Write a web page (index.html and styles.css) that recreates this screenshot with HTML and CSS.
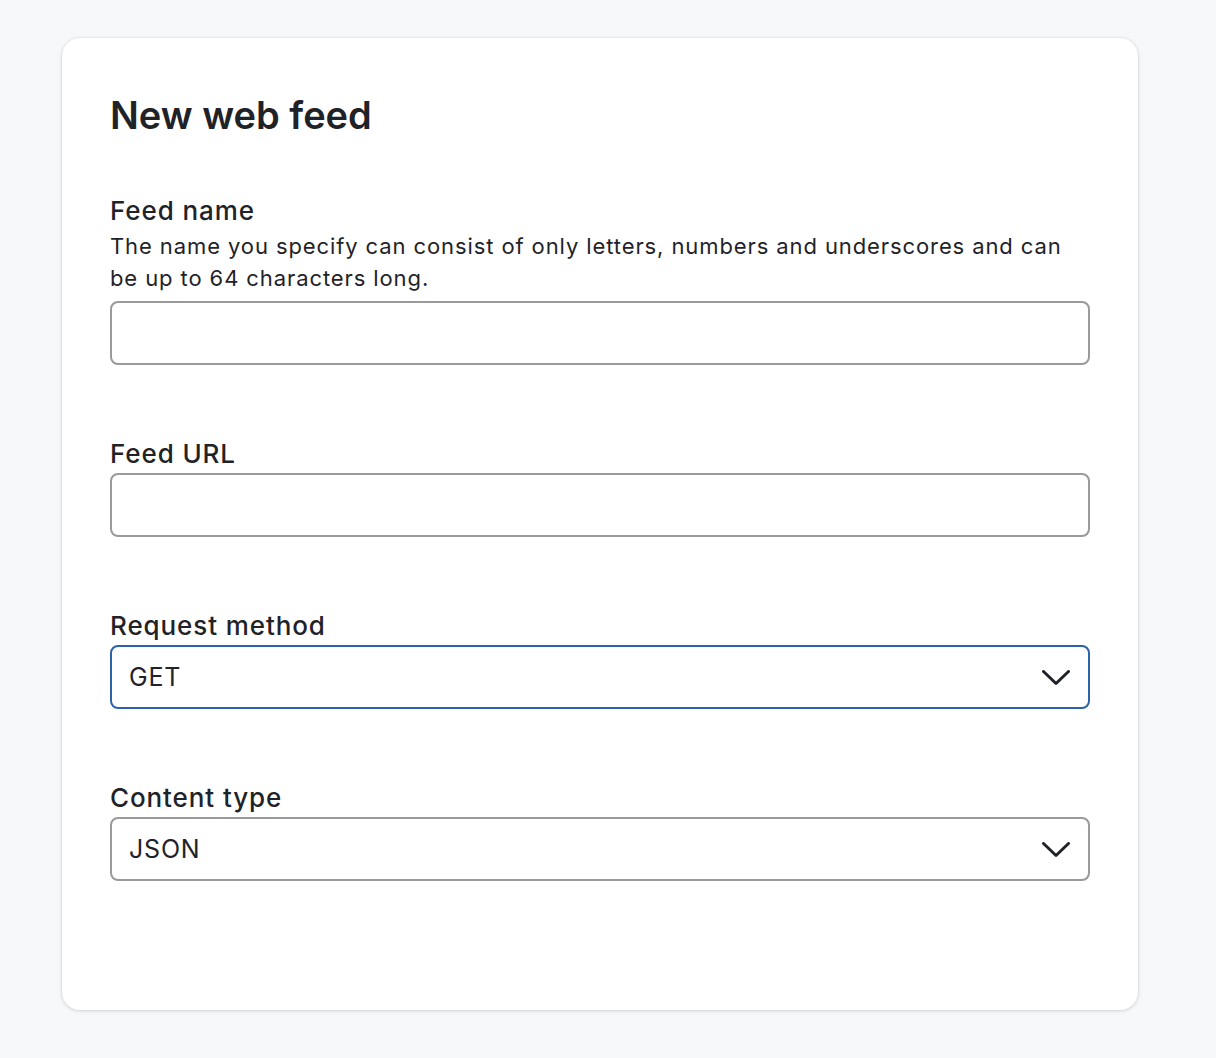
FILE: index.html
```html
<!DOCTYPE html>
<html lang="en">
<head>
<meta charset="utf-8">
<title>New web feed</title>
<link rel="stylesheet" href="styles.css">
</head>
<body>
<main class="card">
  <h1 class="title">New web feed</h1>
  <div class="field">
    <label class="label" for="name">Feed name</label>
    <p class="hint">The name you specify can consist of only letters, numbers and underscores and can be up to 64 characters long.</p>
    <input class="input" id="name" type="text">
  </div>
  <div class="field">
    <label class="label" for="url">Feed URL</label>
    <input class="input" id="url" type="text">
  </div>
  <div class="field">
    <label class="label" for="method">Request method</label>
    <div class="select focused">
      <span class="select-value">GET</span>
      <svg class="chevron" width="28" height="16" viewBox="0 0 28 16"><path d="M1.5 1.5 L14 13.5 L26.5 1.5" fill="none" stroke="#1f2328" stroke-width="3" stroke-linecap="round" stroke-linejoin="round"/></svg>
    </div>
  </div>
  <div class="field last">
    <label class="label" for="type">Content type</label>
    <div class="select">
      <span class="select-value">JSON</span>
      <svg class="chevron" width="28" height="16" viewBox="0 0 28 16"><path d="M1.5 1.5 L14 13.5 L26.5 1.5" fill="none" stroke="#1f2328" stroke-width="3" stroke-linecap="round" stroke-linejoin="round"/></svg>
    </div>
  </div>
</main>
</body>
</html>
```
FILE: styles.css
```css
* { box-sizing: border-box; }
html, body { margin: 0; padding: 0; }
body {
  background: #f7f8fa;
  font-family: Inter, "Noto Sans", "Liberation Sans", sans-serif;
  color: #1f2328;
  padding: 38px 78px 48px 62px;
}
.card {
  width: 1076px;
  height: 972px;
  background: #ffffff;
  border-radius: 18px;
  box-shadow: 0 1px 4px rgba(0,0,0,0.13), 0 0 0 1px rgba(0,0,0,0.04);
  padding: 52px 48px 48px 48px;
}
.title {
  margin: 0 0 55px 0;
  font-size: 38px;
  line-height: 50px;
  font-weight: 600;
  letter-spacing: 0;
}
.field { margin-bottom: 73px; }
.label {
  display: block;
  font-size: 26px;
  line-height: 32px;
  font-weight: 500;
  letter-spacing: 0.9px;
  margin-bottom: 3px;
}
.hint {
  margin: 1px 0 7px 0;
  font-size: 22px;
  line-height: 32px;
  font-weight: 400;
  letter-spacing: 0.9px;
}
.input, .select {
  display: block;
  width: 980px;
  height: 64px;
  border: 2px solid #9a9a9a;
  border-radius: 8px;
  background: #fff;
  font: inherit;
}
.select {
  display: flex;
  align-items: center;
  justify-content: space-between;
  padding: 0 18px 0 17px;
}
.select.focused { border-color: #2c63a8; }
.select-value {
  font-size: 25px;
  font-weight: 400;
  letter-spacing: 0.8px;
}
.chevron { display: block; margin-top: 1px; }
```
